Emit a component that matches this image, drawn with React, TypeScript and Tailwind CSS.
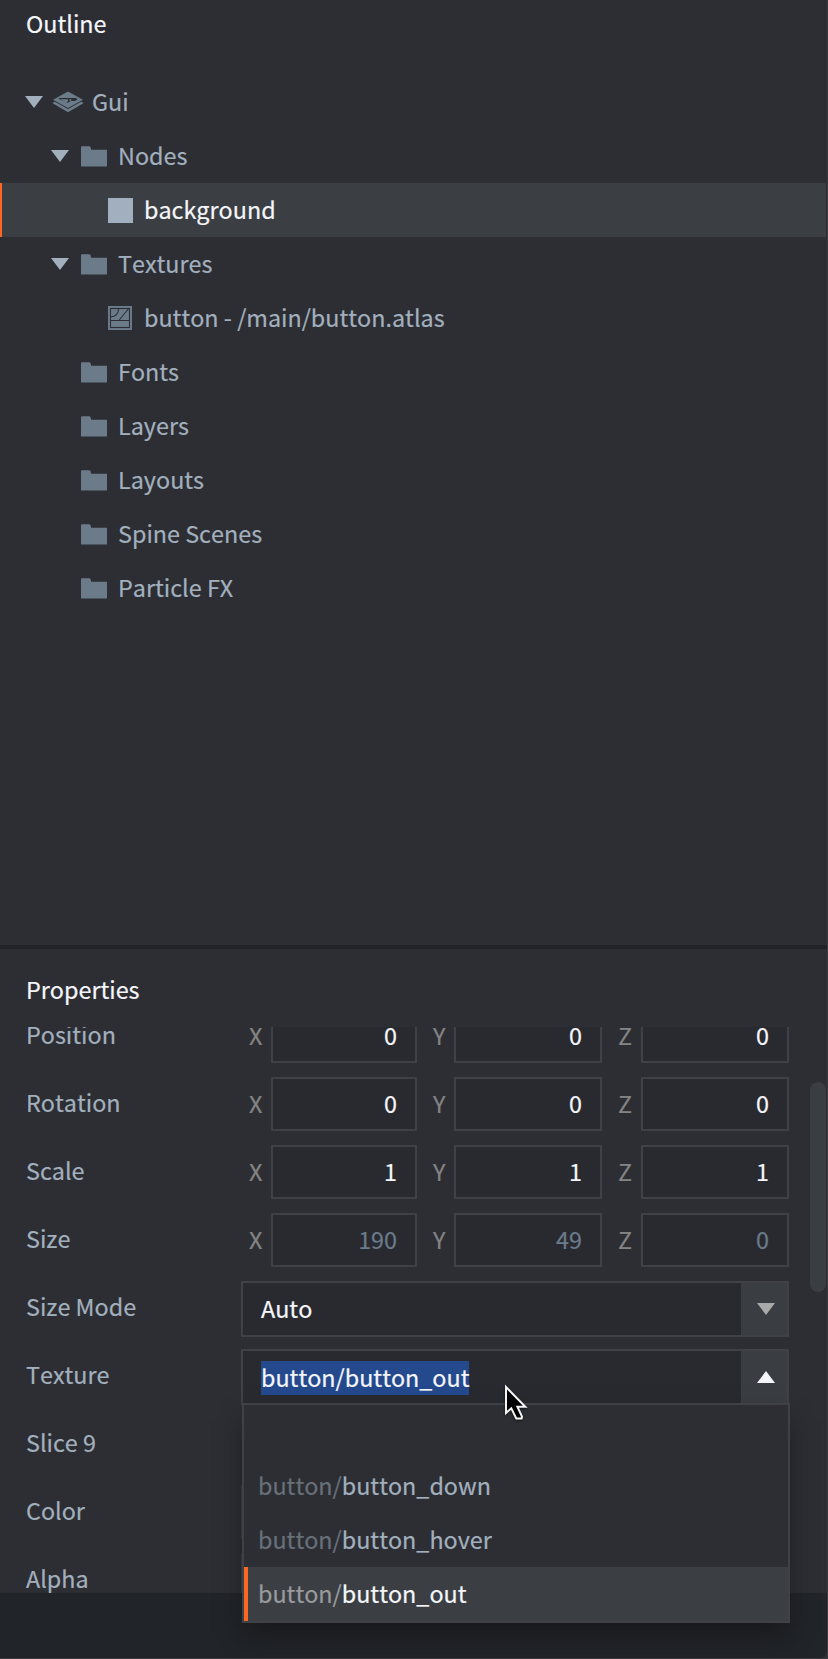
import React from "react";

const FONT = "font-['Noto_Sans_CJK_SC','Noto_Sans',sans-serif]";

function Folder() {
  return (
    <svg className="w-[26px] h-[21px] shrink-0" viewBox="0 0 26 21" fill="#6b7b8a">
      <path d="M0 1.5Q0 .3 1.2.3H8.3Q9.6.3 9.8 1.8L10.1 3.8H26V20.5H0Z" />
    </svg>
  );
}

function GuiIcon() {
  return (
    <svg className="w-[30px] h-[22px] shrink-0" viewBox="0 0 30 22">
      <path d="M15 .4 30 8.8 15 17 0 8.8Z" fill="#6b7b8a" />
      <path d="M0 12.6V11.4L2 10.8 15 18.1 28 10.8 30 11.4V12.6L15 21.2Z" fill="#6b7b8a" />
      <path d="M5.2 7H23.2L24.4 8.4 21.8 10H17.8L14.8 11.7 11.5 11.2Z" fill="#2d2e33" />
      <path d="M7.6 8.3H15V9.8L13.8 11.8H11.8Z" fill="#6b7b8a" />
      <circle cx="17.3" cy="9" r="1" fill="#6b7b8a" />
    </svg>
  );
}

function AtlasIcon() {
  return (
    <svg className="w-6 h-6 shrink-0" viewBox="0 0 24 24">
      <rect width="24" height="24" fill="#6b7b8a" />
      <g fill="none" stroke="#2d2e33" strokeWidth="1.1">
        <rect x="2.5" y="2.5" width="19" height="19" />
        <path d="M2.5 14.5H21.5M11.3 14 20.3 3M2.5 11Q10.4 10.5 10.6 2.5" />
      </g>
    </svg>
  );
}

function Triangle({ className, up = false }: { className: string; up?: boolean }) {
  return (
    <svg className={`w-[18px] h-3 shrink-0 fill-current ${className}`} viewBox="0 0 18 12">
      <path d={up ? "M0 12 9 0 18 12Z" : "M0 0H18L9 12Z"} />
    </svg>
  );
}

type Node = {
  label: string;
  pad: string;
  open?: boolean;
  icon: "gui" | "folder" | "box" | "atlas";
  selected?: boolean;
};

const nodes: Node[] = [
  { label: "Gui", pad: "pl-[25px]", open: true, icon: "gui" },
  { label: "Nodes", pad: "pl-[51px]", open: true, icon: "folder" },
  { label: "background", pad: "pl-[106px]", icon: "box", selected: true },
  { label: "Textures", pad: "pl-[51px]", open: true, icon: "folder" },
  { label: "button - /main/button.atlas", pad: "pl-[108px]", icon: "atlas" },
  { label: "Fonts", pad: "pl-[81px]", icon: "folder" },
  { label: "Layers", pad: "pl-[81px]", icon: "folder" },
  { label: "Layouts", pad: "pl-[81px]", icon: "folder" },
  { label: "Spine Scenes", pad: "pl-[81px]", icon: "folder" },
  { label: "Particle FX", pad: "pl-[81px]", icon: "folder" },
];

function TreeRow({ n }: { n: Node }) {
  return (
    <div
      className={`flex h-[54px] items-center ${n.pad} ${
        n.selected ? "border-l-2 border-[#fd6623] bg-[#3b3f43] text-[#f5f6fa]" : "text-[#a2b0be]"
      }`}
    >
      {n.open && (
        <Triangle className={`text-[#a2b0be] ${n.icon === "gui" ? "mr-[10px]" : "mr-3"}`} />
      )}
      {n.icon === "gui" && <GuiIcon />}
      {n.icon === "folder" && <Folder />}
      {n.icon === "box" && <span className="mr-px size-[25px] shrink-0 bg-[#a2afbf]" />}
      {n.icon === "atlas" && <AtlasIcon />}
      <span
        className={`pb-[2px] whitespace-pre ${
          n.icon === "gui" ? "ml-[9px]" : n.icon === "atlas" ? "ml-3" : n.icon === "box" ? "ml-[10px]" : "ml-[11px]"
        }`}
      >
        {n.label}
      </span>
    </div>
  );
}

function Label({ children }: { children: React.ReactNode }) {
  return (
    <div className="flex h-[54px] w-[215px] shrink-0 items-center whitespace-pre pb-[4px] text-[#a2b0be]">
      {children}
    </div>
  );
}

function Axis({ name, value, label, box, dim }: { name: string; value: string; label: string; box: string; dim?: boolean }) {
  return (
    <>
      <span className={`${label} shrink-0 pb-[2px] text-[#848484]`}>{name}</span>
      <div
        className={`${box} flex h-[54px] shrink-0 items-center justify-end border-2 border-[#404146] bg-[#292a2f] pr-[18px] pb-[2px] ${
          dim ? "text-[#6b7b8c]" : "text-[#f5f6fa]"
        }`}
      >
        {value}
      </div>
    </>
  );
}

function VectorRow({ title, v, dim }: { title: string; v: string[]; dim?: boolean }) {
  return (
    <div className="flex h-[68px] items-start">
      <Label>{title}</Label>
      <div className="flex h-[54px] items-center pl-2">
        <Axis name="X" value={v[0]} label="w-[22px]" box="w-[146px]" dim={dim} />
        <Axis name="Y" value={v[1]} label="ml-[16px] w-[21px]" box="w-[148px]" dim={dim} />
        <Axis name="Z" value={v[2]} label="ml-[16px] w-[23px]" box="w-[148px]" dim={dim} />
      </div>
    </div>
  );
}

function SelectRow({ title, children, open }: { title: string; children: React.ReactNode; open?: boolean }) {
  return (
    <div className="flex h-[68px] items-start">
      <Label>{title}</Label>
      <div className="flex h-14 w-[548px] border-2 border-[#404146] bg-[#292a2f] text-[#f5f6fa]">
        <div className="flex flex-1 items-center pl-[18px]">{children}</div>
        <div className="flex w-[46px] items-center justify-center bg-[#3a3d41] pl-1">
          <Triangle up={open} className={open ? "text-[#f5f6fa]" : "text-[#a9a9a9]"} />
        </div>
      </div>
    </div>
  );
}

const options = ["down", "hover", "out"];

export default function App() {
  return (
    <div
      className={`relative flex h-[1659px] w-[828px] flex-col overflow-hidden bg-[#2d2e33] text-[23.35px] leading-[34px] [font-kerning:none] [-webkit-text-stroke:0.2px_currentColor] ${FONT}`}
    >
      <section className="h-[945px] pr-[2px]">
        <h2 className="h-[75px] pt-[6px] pl-[26px] text-[#f5f6fa]">Outline</h2>
        {nodes.map((n) => (
          <TreeRow key={n.label} n={n} />
        ))}
      </section>
      <div className="h-1 bg-[#222327]" />
      <section className="flex h-[644px] flex-col">
        <h2 className="h-[78px] shrink-0 pt-[23px] pl-[26px] text-[#f5f6fa]">Properties</h2>
        <div className="flex flex-1 justify-between overflow-hidden pr-[2px] pl-[26px]">
          <div className="-mt-[18px]">
            <VectorRow title="Position" v={["0", "0", "0"]} />
            <VectorRow title="Rotation" v={["0", "0", "0"]} />
            <VectorRow title="Scale" v={["1", "1", "1"]} />
            <VectorRow title="Size" v={["190", "49", "0"]} dim />
            <SelectRow title="Size Mode">
              <span className="pb-[2px]">Auto</span>
            </SelectRow>
            <SelectRow title="Texture" open>
              <span className="mt-[2px] bg-[#24498d] pb-[2px] leading-8">button/button_out</span>
            </SelectRow>
            <div className="h-[68px]">
              <Label>Slice 9</Label>
            </div>
            {["Color", "Alpha"].map((t) => (
              <div key={t} className="flex h-[68px]">
                <Label>{t}</Label>
                <div className="h-[54px] w-[548px] border-2 border-[#404146]" />
              </div>
            ))}
          </div>
          <div className="mt-[55px] h-[210px] w-4 rounded-full bg-[#3a3d41]" />
        </div>
      </section>
      <footer className="h-[66px] bg-[#2d2e33]">
        <div className="h-[65px] rounded-br-[9px] bg-[#212428]" />
      </footer>

      <div className="absolute top-0 right-0 h-full w-px bg-[#3a3b3f]" />
      <div className="absolute bottom-0 left-0 h-px w-full bg-[#3a3b3f]" />

      <div className="absolute top-[1403px] left-[242px] w-[548px] border-2 border-[#404146] bg-[#2d2e33] pt-[54px] shadow-[0_14px_24px_-4px_rgba(20,20,22,0.75)]">
        {options.map((o) => {
          const active = o === "out";
          return (
            <div
              key={o}
              className={`flex h-[54px] items-center pb-[2px] ${
                active ? "border-l-4 border-[#fd6623] bg-[#3b3f43] pl-[10px] text-[#f5f6fa]" : "pl-[14px] text-[#a2b0be]"
              }`}
            >
              <span className={active ? "text-[#999b9e]" : "text-[#687079]"}>button/</span>
              <span>button_{o}</span>
            </div>
          );
        })}
      </div>

      <svg className="absolute top-[1383px] left-[503px] h-[39px] w-[27px] drop-shadow-[0_1px_1px_rgba(0,0,0,0.6)]" viewBox="0 0 27 39">
        <path d="M3 4V30L8.3 25.3 13.3 35.4H18.6L19 33.5 14.4 23.8H22.3Z" fill="#000" stroke="#f5f5f5" strokeWidth="2" />
      </svg>
    </div>
  );
}
